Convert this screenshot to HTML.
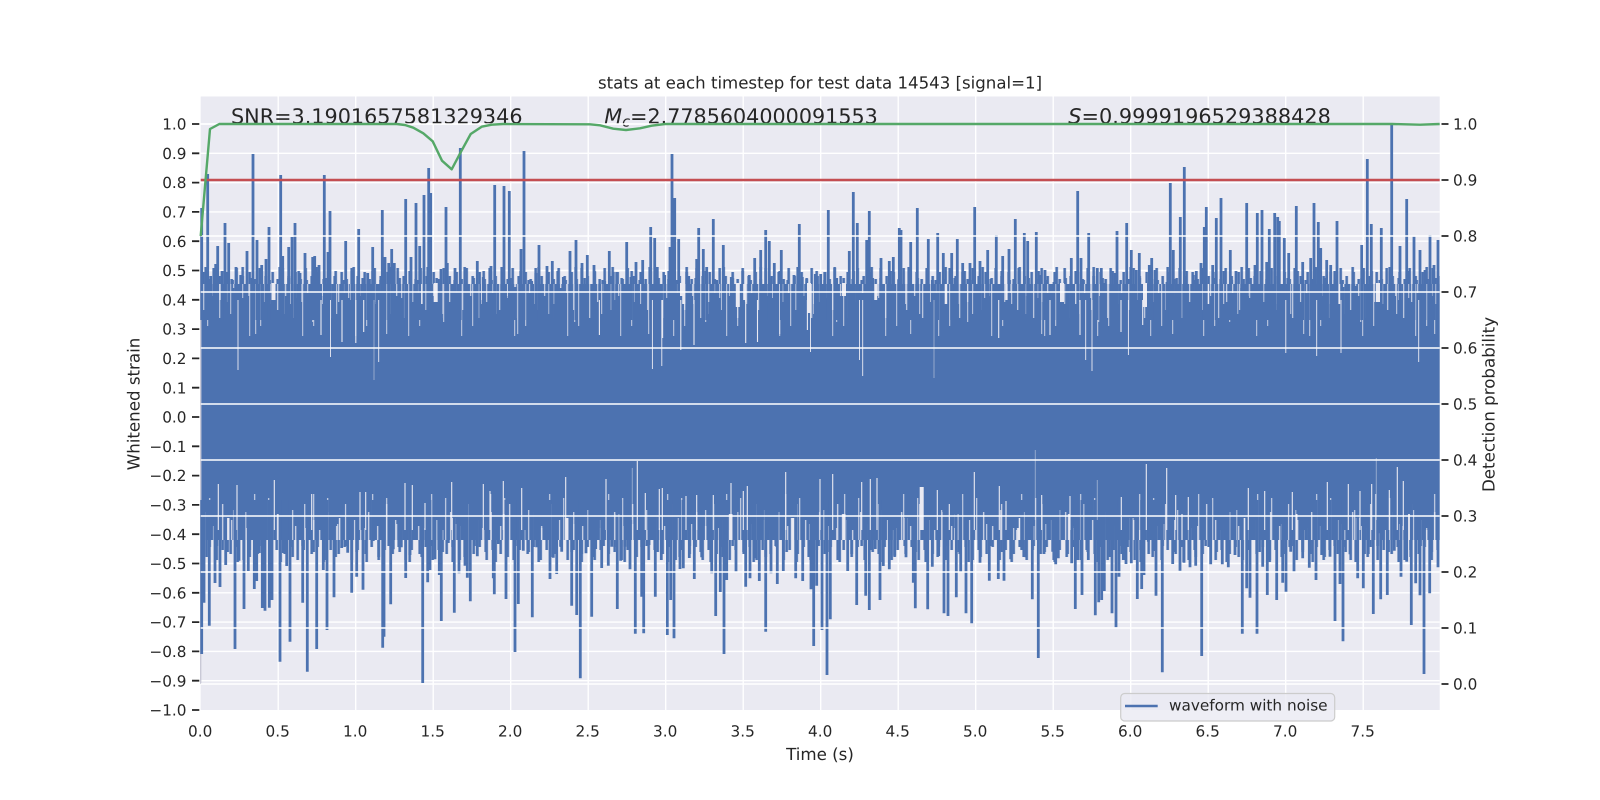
<!DOCTYPE html>
<html><head><meta charset="utf-8"><title>stats at each timestep</title>
<style>html,body{margin:0;padding:0;background:#fff}svg{display:block;filter:blur(.3px)}text{font-family:"DejaVu Sans","Liberation Sans",sans-serif;fill:#262626;text-rendering:geometricPrecision}</style></head>
<body>
<svg width="1600" height="800" viewBox="0 0 1600 800" xmlns="http://www.w3.org/2000/svg">
<defs>
<pattern id="nt1" patternUnits="userSpaceOnUse" x="200.7" y="284" width="37" height="80"><path d="M3 0v26M11 0v12M19 0v34M27 0v18M33 0v9" stroke="#eaeaf2" stroke-width="1.1" stroke-opacity=".85"/></pattern>
<pattern id="nt2" patternUnits="userSpaceOnUse" x="200.7" y="284" width="53" height="80"><path d="M7 0v42M16 0v20M30 0v30M42 0v14M49 0v52" stroke="#eaeaf2" stroke-width="1" stroke-opacity=".8"/></pattern>
<pattern id="nt3" patternUnits="userSpaceOnUse" x="200.7" y="284" width="131" height="80"><path d="M20 0v16M90 0v20" stroke="#eaeaf2" stroke-width="3"/><path d="M55 0v50M112 0v38" stroke="#eaeaf2" stroke-width=".8"/></pattern>
<pattern id="nb1" patternUnits="userSpaceOnUse" x="200.7" y="460" width="41" height="80"><path d="M4 80v-28M13 80v-14M22 80v-36M31 80v-20M37 80v-10" stroke="#eaeaf2" stroke-width="1.2" stroke-opacity=".9"/></pattern>
<pattern id="nb2" patternUnits="userSpaceOnUse" x="200.7" y="460" width="59" height="80"><path d="M9 80v-42M19 80v-16M33 80v-30M46 80v-12M54 80v-46" stroke="#eaeaf2" stroke-width="1.1" stroke-opacity=".85"/></pattern>
<pattern id="nb3" patternUnits="userSpaceOnUse" x="200.7" y="460" width="113" height="80"><path d="M27 80v-22M78 80v-26" stroke="#eaeaf2" stroke-width="3.5"/></pattern>
<pattern id="ft1" patternUnits="userSpaceOnUse" x="200.7" y="264" width="23" height="20"><path d="M3 20v-12M8 20v-5M13 20v-16M19 20v-8" stroke="#4c72b0" stroke-width="2.6"/></pattern>
<pattern id="ft2" patternUnits="userSpaceOnUse" x="200.7" y="264" width="37" height="20"><path d="M5 20v-17M14 20v-6M24 20v-13M32 20v-4" stroke="#4c72b0" stroke-width="2.6"/></pattern>
<pattern id="fb1" patternUnits="userSpaceOnUse" x="200.7" y="540" width="27" height="24"><path d="M3 0v14M9 0v7M16 0v20M22 0v10" stroke="#4c72b0" stroke-width="2.6"/></pattern>
<pattern id="fb2" patternUnits="userSpaceOnUse" x="200.7" y="540" width="43" height="24"><path d="M6 0v17M16 0v6M27 0v12M37 0v22" stroke="#4c72b0" stroke-width="2.6"/></pattern>
</defs>

<rect x="200.7" y="96.5" width="1239" height="613.5" fill="#eaeaf2"/>

<!-- left grid -->
<path stroke="#fff" stroke-width="1.4" fill="none" d="M200.7 124H1439.7M200.7 153.3H1439.7M200.7 182.6H1439.7M200.7 211.9H1439.7M200.7 241.2H1439.7M200.7 270.5H1439.7M200.7 299.8H1439.7M200.7 329.1H1439.7M200.7 358.4H1439.7M200.7 387.7H1439.7M200.7 417H1439.7M200.7 446.3H1439.7M200.7 475.6H1439.7M200.7 504.9H1439.7M200.7 534.2H1439.7M200.7 563.5H1439.7M200.7 592.8H1439.7M200.7 622.1H1439.7M200.7 651.4H1439.7M200.7 680.7H1439.7"/>
<path stroke="#fff" stroke-width="1.4" fill="none" d="M278.2 96.5V710M355.7 96.5V710M433.2 96.5V710M510.7 96.5V710M588.2 96.5V710M665.7 96.5V710M743.2 96.5V710M820.7 96.5V710M898.2 96.5V710M975.7 96.5V710M1053.2 96.5V710M1130.7 96.5V710M1208.2 96.5V710M1285.7 96.5V710M1363.2 96.5V710"/>

<!-- waveform -->
<path stroke="#c9c9d6" stroke-width="1.4" d="M200.7 235V684"/>
<rect x="201.4" y="284" width="1238.3" height="256" fill="#4c72b0"/>
<rect x="201.4" y="264" width="1238.3" height="20.5" fill="url(#ft1)"/>
<rect x="201.4" y="264" width="1238.3" height="20.5" fill="url(#ft2)"/>
<rect x="201.4" y="540" width="1238.3" height="24" fill="url(#fb1)"/>
<rect x="201.4" y="540" width="1238.3" height="24" fill="url(#fb2)"/>
<rect x="201.4" y="284" width="1238.3" height="80" fill="url(#nt1)"/>
<rect x="201.4" y="284" width="1238.3" height="80" fill="url(#nt2)"/>
<rect x="201.4" y="284" width="1238.3" height="80" fill="url(#nt3)"/>
<rect x="201.4" y="460" width="1238.3" height="80" fill="url(#nb1)"/>
<rect x="201.4" y="460" width="1238.3" height="80" fill="url(#nb2)"/>
<rect x="201.4" y="460" width="1238.3" height="80" fill="url(#nb3)"/>

<!-- top spikes -->
<path stroke="#4c72b0" stroke-width="2.8" fill="none" d="M201.7 208V320M207.7 174V320M210.7 276V320M215.7 264V320M217.7 246V320M222 271V320M225 223V320M228.7 243V320M233 288V320M236 267V320M240.7 275V320M247 251V320M253 154V320M257 240V320M261.7 265V320M266 259V320M269 227V320M272 292V320M280.7 175V320M282.7 256V320M288.7 247V320M292 237V320M295 223V320M300 273V320M305 253V320M312.7 257V320M314.7 256V320M319 265V320M324.3 175V320M330 211V320M328 252V320M345.7 241V320M352 271V320M358.7 229V320M362 284V320M367.7 273V320M372.7 247V320M376.7 284V320M382.3 210V320M385 257V320M388.7 263V320M391.7 249V320M394.3 263V320M405.7 199V320M411 257V320M416 203V320M419.7 246V320M424 195V320M428.7 168V320M430.7 193V320M441 269V320M446 207V320M447.3 263V320M455 268V320M460.3 148V320M468 290V320M477.3 261V320M483.3 277V320M491 266V320M494.7 185V320M504 186V320M509.3 191V320M515 287V320M521 249V320M524 151V320M531.7 281V320M536 273V320M539 245V320M547 266V320M552.3 261V320M561 288V320M563.3 277V320M570 251V320M576 240V320M582 263V320M587.3 255V320M594 265V320M604.7 281V320M609.3 251V320M613.3 272V320M616.7 272V320M626.7 242V320M631 277V320M636 262V320M642.7 260V320M650.7 227V320M654.7 238V320M657.3 267V320M664.7 275V320M670 247V320M672 154V320M674.7 198V320M678.7 239V320M688.7 276V320M696.7 259V320M698.7 228V320M703.3 249V320M706.7 267V320M713.3 219V320M716.7 280V320M723.3 245V320M731.3 277V320M741 291V320M749.3 275V320M754.7 258V320M760.7 250V320M765.7 230V320M769.3 241V320M774.3 263V320M781.3 250V320M794 275V320M799.3 224V320M802.3 277V320M815.3 274V320M820.7 274V320M825 272V320M828.3 210V320M836.7 278V320M849.3 251V320M853.3 192V320M857.3 223V320M866.7 240V320M869.3 211V320M872.7 278V320M881 258V320M889.3 261V320M893.3 257V320M899.3 228V320M901 230V320M910.7 242V320M917.3 208V320M928.3 239V320M932.3 280V320M937.7 233V320M943.3 253V320M951.7 253V320M957.3 239V320M962.7 263V320M970 263V320M974.7 207V320M980 261V320M987.7 250V320M996.3 235V320M1002.7 256V320M1009 249V320M1015.3 219V320M1024.3 233V320M1027.7 241V320M1036.3 232V320M1040 275V320M1045 270V320M1054 282V320M1071.3 258V320M1077.7 191V320M1081 258V320M1088.7 233V320M1097.3 268V320M1101.3 268V320M1104.7 283V320M1115 273V320M1117 231V320M1126.7 223V320M1131.3 250V320M1136.3 270V320M1139.3 253V320M1149.3 265V320M1151.7 258V320M1155 270V320M1167 282V320M1170.3 183V320M1173.3 250V320M1180.3 217V320M1184.3 167V320M1193.3 275V320M1196.3 271V320M1201 263V320M1204.3 227V320M1206.3 207V320M1212.7 265V320M1216.3 218V320M1221 198V320M1230.3 250V320M1236 271V320M1241.7 288V320M1246.7 203V320M1255 265V320M1257.3 213V320M1262 210V320M1266.7 262V320M1269.3 229V320M1274.7 213V320M1277.7 217V320M1279.3 221V320M1284.3 238V320M1288.7 253V320M1296.3 206V320M1302.7 262V320M1310.7 258V320M1314 203V320M1318.3 222V320M1320.7 248V320M1326.7 260V320M1330.7 265V320M1335 280V320M1337 221V320M1343 287V320M1346.7 284V320M1353.3 286V320M1355.7 286V320M1361.7 245V320M1367.3 159V320M1371.3 224V320M1381.3 228V320M1391.7 124.7V320M1400 246V320M1406.7 199V320M1414 236.7V320M1420 250V320M1425 270V320M1430 235V320M1434 265V320M1438 240V320"/>

<!-- bottom spikes -->
<path stroke="#4c72b0" stroke-width="2.8" fill="none" d="M201.7 654V500M204 602.7V500M209.3 625.7V500M215 583V500M220 587V500M225.7 565V500M235 649V500M239 560.7V500M244 609V500M248.3 571V500M254.3 589V500M256.7 581V500M259.3 553V500M262.3 608V500M265 610.7V500M269.3 607.7V500M272 600V500M280 661.7V500M283.3 553V500M286.7 566V500M290 641.7V500M302.7 602.7V500M307.3 671.7V500M316.7 649V500M323.3 570V500M327 630V500M334 597.3V500M341.7 548V500M347.7 552.7V500M351.7 592.7V500M356.7 576.7V500M363 589.7V500M373.3 541V500M382.7 647.7V500M384 636.7V500M390.7 604.3V500M393.3 549.3V500M401.3 547.3V500M405.7 578V500M410 555V500M422.7 683V500M427.7 582.3V500M430 570V500M435 559.3V500M439.3 575V500M441.3 621V500M448.3 543V500M454.3 612.7V500M459 573.3V500M465 565.7V500M467.3 577.7V500M470.3 601.3V500M477.3 556.3V500M488.3 534V500M493.3 578.3V500M494.3 594.3V500M498.3 544V500M506 599V500M515 652V500M518.3 604V500M523.3 550.7V500M532.3 617.3V500M536.7 547.3V500M545 533.3V500M550 579V500M553.3 557.7V500M556.7 574V500M561.7 551.7V500M571.7 605.7V500M576.7 615V500M580.3 678.3V500M586 553.3V500M591.7 616.7V500M595.7 549V500M601.7 568V500M608.3 565.7V500M611.7 546.7V500M617.3 609V500M620.7 560.7V500M625 546.7V500M630 569.3V500M635.3 633.7V500M641.7 596.7V500M643.7 633.3V500M649 545V500M655.3 596.7V500M661.3 560V500M667.3 635V500M670.7 600V500M674 638.3V500M680 569V500M683.3 568.3V500M689.3 558V500M694.3 579V500M701.7 557.3V500M711.7 573.3V500M715.7 616V500M720.3 592V500M724 654V500M726.7 580V500M736 571.7V500M745.7 586.7V500M750 578.3V500M755 558.3V500M759.3 581V500M765.7 631.7V500M771 573.3V500M777.3 584V500M783.3 571V500M795.7 578.3V500M802.7 581V500M811 589.3V500M813.7 646V500M816.7 585.7V500M822 630V500M827 675V500M830.3 619.3V500M847.7 571V500M856.7 605V500M865.7 595.7V500M869.3 610V500M875.3 549V500M880 600V500M883.3 566V500M889.3 569.3V500M894.7 555.7V500M906 557.3V500M913.3 582.7V500M915.3 608.3V500M927.7 609.3V500M932.3 566.7V500M938.7 556V500M944 613.3V500M948 616V500M956.3 597.3V500M960.7 571.7V500M966 613.3V500M971.7 623.3V500M980 562.7V500M989.3 580.7V500M998.3 579V500M1004 580.7V500M1010.7 559.3V500M1017.3 528V500M1021.7 550V500M1026 557.3V500M1032.3 599.3V500M1038.3 658V500M1044 554V500M1048.3 533.3V500M1052.7 551.7V500M1055.7 564.3V500M1058.3 558.3V500M1071.7 563.3V500M1075.3 609V500M1077.7 560V500M1082 595V500M1088.3 560V500M1095.3 615.3V500M1098.7 602.3V500M1101.7 600V500M1104.3 591V500M1107.3 540V500M1112 613.3V500M1116 627.3V500M1119 576.7V500M1123.3 560V500M1126 564V500M1131.3 563.3V500M1137.3 599V500M1141.7 589V500M1144 575V500M1148.3 541.7V500M1153.3 551V500M1156 595.7V500M1162.3 672.3V500M1172.7 564V500M1180 570.7V500M1184 562.7V500M1190 567.3V500M1195.7 565.7V500M1201.7 656V500M1210.7 564.3V500M1222.3 564.3V500M1228.3 567.3V500M1235 555V500M1242.3 633.7V500M1246.7 588.3V500M1250 597.7V500M1257 633.7V500M1262.7 566.7V500M1267.3 595V500M1276.7 600V500M1282.7 582.7V500M1286 591.7V500M1290.7 551.7V500M1294 571.7V500M1302.7 558.3V500M1309.3 567.7V500M1316 580V500M1321.7 555V500M1330 556.7V500M1335 621V500M1340 584V500M1343 641.3V500M1350 554.3V500M1357.7 578.3V500M1363.3 588.3V500M1368.3 554V500M1373.3 614V500M1378.3 533.3V500M1380.7 599.3V500M1387.3 595V500M1394.3 550.7V500M1401 576.7V500M1406.7 561.7V500M1411.3 625V500M1415.7 583.3V500M1420 595.3V500M1424 674V500M1429.7 593.3V500M1438 567.3V500"/>

<!-- hand-read notches -->
<path stroke="#eaeaf2" stroke-width=".9" fill="none" d="M238 300V370M330.5 300V357M378.7 300V362M652.4 300V369M661.8 300V366M810.5 300V352M859.5 300V360M862.7 300V376M1085.7 300V360M1092 300V371M1128.4 300V355M1285.8 300V353M1316.7 300V356M1341 300V353M1418.7 300V362"/>
<path stroke="#eaeaf2" stroke-opacity=".45" stroke-width="1" fill="none" d="M374 300V380M934 300V378M1035.3 520V450M1097.3 520V480M632.3 520V468M1376.3 520V458"/>
<path stroke="#eaeaf2" stroke-width="1.1" fill="none" d="M321 300V335M342 300V342M355.8 300V343M363.7 300V332M599.4 300V335M662.6 300V338M680.8 300V350M694 300V345M745.7 300V343M757.5 300V342M807.4 300V330M998.7 300V338M1050 300V335M1080 300V335M1121 300V332M1142.7 300V325M218.3 530V484M237 530V485M274.3 530V480M311.7 530V494M360 530V492M365.7 530V492M405 530V483M412.3 530V485M425 530V503M451.7 530V482M483.3 530V484M490 530V491M503.3 530V481M521.7 530V488M565.7 530V477M606 530V479M637.3 530V461M645.3 530V493M659.3 530V489M662.3 530V488M686 530V496M696.7 530V495M713.3 530V495M731 530V483M743.3 530V491M747.3 530V486M785.7 530V472M820 530V479M832.7 530V474M861.7 530V482M870.3 530V479M877 530V478M937.3 530V490M949.3 530V504M974.3 530V472M999.3 530V486M1006 530V501M1041.7 530V495M1070 530V496M1121.3 530V497M1146.3 530V464M1166.7 530V468M1175.7 530V495M1188.3 530V497M1248.3 530V488M1264.7 530V491M1292.3 530V492M1327.3 530V482M1348.3 530V484M1360 530V491M1371.7 530V484M1389.3 530V490M1397.3 530V467M1403.3 530V481"/>
<path stroke="#eaeaf2" stroke-width="4" fill="none" d="M273.5 283V300M435.7 283V302M737.8 283V307M809 283V313M1062 283V302M1145 283V307M1378 283V302M682 283V296M844 283V296M921.7 530V487"/>

<!-- annotations -->
<text x="231" y="123.5" font-size="20.75">SNR=3.1901657581329346</text>
<text x="604.3" y="123.5" font-size="20.7"><tspan font-style="italic">M</tspan><tspan font-style="italic" font-size="14.5" dy="3">c</tspan><tspan dy="-3">=2.7785604000091553</tspan></text>
<text x="1068.3" y="123.5" font-size="20.83"><tspan font-style="italic">S</tspan>=0.9999196529388428</text>

<!-- twin grid -->
<path stroke="#fff" stroke-width="1.4" fill="none" d="M200.7 124H1439.7M200.7 180H1439.7M200.7 236H1439.7M200.7 292H1439.7M200.7 348H1439.7M200.7 404H1439.7M200.7 460H1439.7M200.7 516H1439.7M200.7 572H1439.7M200.7 628H1439.7M200.7 684H1439.7"/>

<!-- red and green -->
<path stroke="#c44e52" stroke-width="2.4" fill="none" d="M200.7 180H1439.7"/>
<path stroke="#55a868" stroke-width="2.4" fill="none" stroke-linejoin="round" d="M200.7 236L210 129L219.3 124L396.7 124L405 125L413.3 127.7L423.3 133.3L432.7 141.3L442 160.7L451.7 169.3L461 151.7L470.7 134L481.7 126.7L491.7 124.7L503 124L590 124.3L600 125.3L613.3 128.7L626 130L640 128.3L651.7 125.7L665 124L1392 124L1420 124.7L1439.7 124"/>

<!-- ticks -->
<path stroke="#262626" stroke-width="1.8" fill="none" d="M192 124h7.3M192 153.3h7.3M192 182.6h7.3M192 211.9h7.3M192 241.2h7.3M192 270.5h7.3M192 299.8h7.3M192 329.1h7.3M192 358.4h7.3M192 387.7h7.3M192 417h7.3M192 446.3h7.3M192 475.6h7.3M192 504.9h7.3M192 534.2h7.3M192 563.5h7.3M192 592.8h7.3M192 622.1h7.3M192 651.4h7.3M192 680.7h7.3M192 710h7.3"/>
<path stroke="#262626" stroke-width="1.8" fill="none" d="M1441.5 124h7M1441.5 180h7M1441.5 236h7M1441.5 292h7M1441.5 348h7M1441.5 404h7M1441.5 460h7M1441.5 516h7M1441.5 572h7M1441.5 628h7M1441.5 684h7"/>

<!-- left labels -->
<g font-size="15.28" text-anchor="end">
<text x="186.5" y="129.6">1.0</text><text x="186.5" y="158.9">0.9</text><text x="186.5" y="188.2">0.8</text><text x="186.5" y="217.5">0.7</text><text x="186.5" y="246.8">0.6</text><text x="186.5" y="276.1">0.5</text><text x="186.5" y="305.4">0.4</text><text x="186.5" y="334.7">0.3</text><text x="186.5" y="364">0.2</text><text x="186.5" y="393.3">0.1</text><text x="186.5" y="422.6">0.0</text><text x="186.5" y="451.9">−0.1</text><text x="186.5" y="481.2">−0.2</text><text x="186.5" y="510.5">−0.3</text><text x="186.5" y="539.8">−0.4</text><text x="186.5" y="569.1">−0.5</text><text x="186.5" y="598.4">−0.6</text><text x="186.5" y="627.7">−0.7</text><text x="186.5" y="657">−0.8</text><text x="186.5" y="686.3">−0.9</text><text x="186.5" y="715.6">−1.0</text>
</g>
<!-- right labels -->
<g font-size="15.28">
<text x="1453" y="129.6">1.0</text><text x="1453" y="185.6">0.9</text><text x="1453" y="241.6">0.8</text><text x="1453" y="297.6">0.7</text><text x="1453" y="353.6">0.6</text><text x="1453" y="409.6">0.5</text><text x="1453" y="465.6">0.4</text><text x="1453" y="521.6">0.3</text><text x="1453" y="577.6">0.2</text><text x="1453" y="633.6">0.1</text><text x="1453" y="689.6">0.0</text>
</g>
<!-- x labels -->
<g font-size="15.28" text-anchor="middle">
<text x="200.2" y="736.7">0.0</text><text x="277.7" y="736.7">0.5</text><text x="355.2" y="736.7">1.0</text><text x="432.7" y="736.7">1.5</text><text x="510.2" y="736.7">2.0</text><text x="587.7" y="736.7">2.5</text><text x="665.2" y="736.7">3.0</text><text x="742.7" y="736.7">3.5</text><text x="820.2" y="736.7">4.0</text><text x="897.7" y="736.7">4.5</text><text x="975.2" y="736.7">5.0</text><text x="1052.7" y="736.7">5.5</text><text x="1130.2" y="736.7">6.0</text><text x="1207.7" y="736.7">6.5</text><text x="1285.2" y="736.7">7.0</text><text x="1362.7" y="736.7">7.5</text>
</g>

<text x="820" y="88.3" font-size="16.6" text-anchor="middle">stats at each timestep for test data 14543 [signal=1]</text>
<text x="820" y="760" font-size="16.67" text-anchor="middle">Time (s)</text>
<text transform="translate(139.3 404) rotate(-90)" font-size="16.67" text-anchor="middle">Whitened strain</text>
<text transform="translate(1494.5 404.5) rotate(-90)" font-size="16.67" text-anchor="middle">Detection probability</text>

<!-- legend -->
<rect x="1120.7" y="693.5" width="214" height="27.5" rx="4" fill="#eaeaf2" fill-opacity=".8" stroke="#ccc" stroke-width="1.2"/>
<path stroke="#4c72b0" stroke-width="2.4" d="M1125 706H1157.7"/>
<text x="1169" y="710.7" font-size="15.28">waveform with noise</text>
</svg>
</body></html>
